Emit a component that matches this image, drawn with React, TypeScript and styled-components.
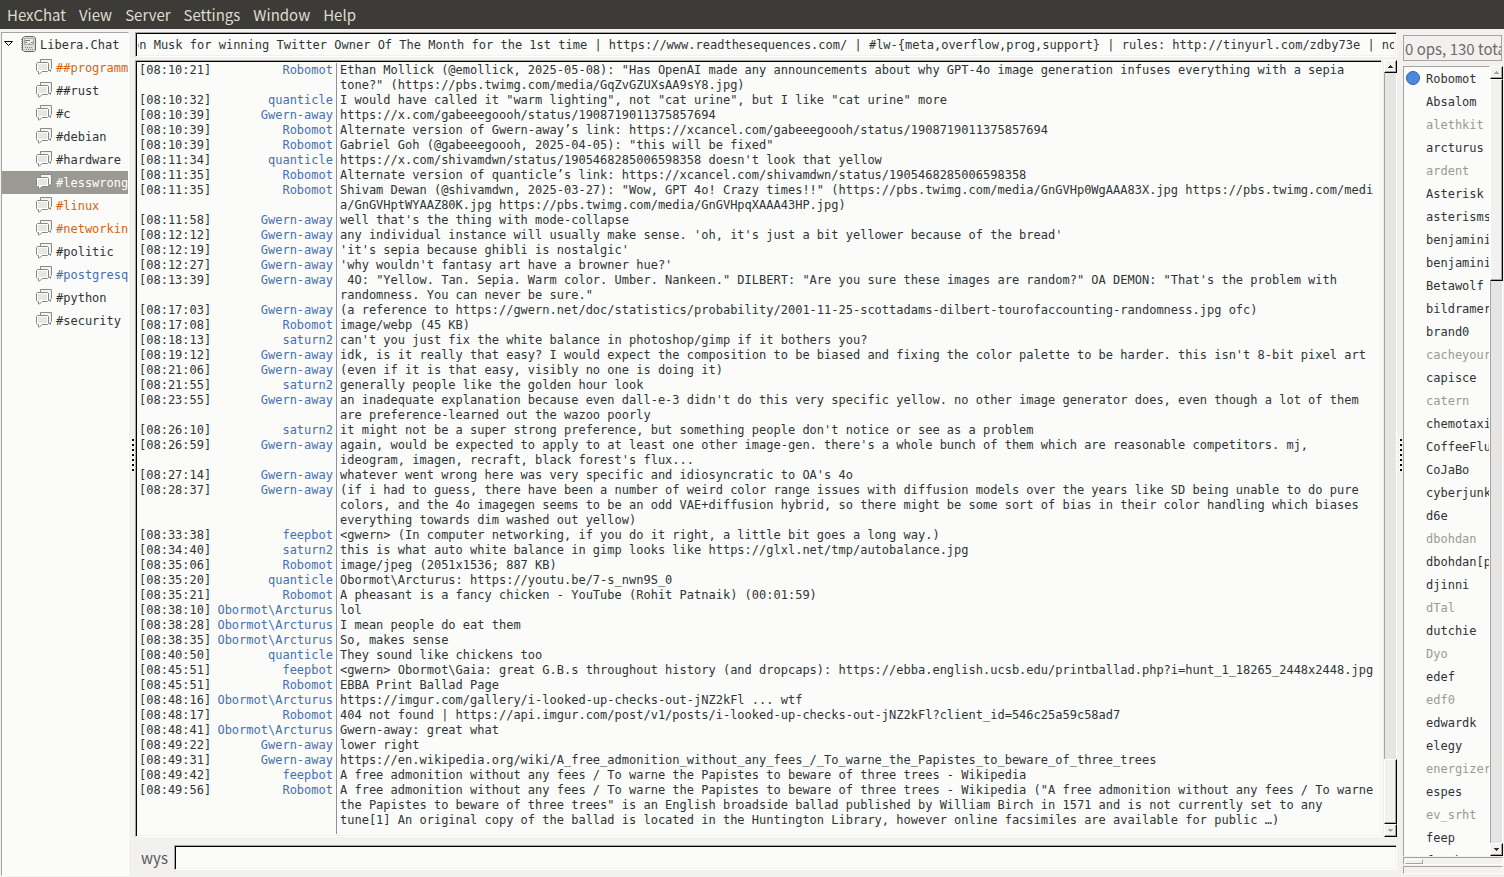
import React from "react";
import styled, { createGlobalStyle } from "styled-components";

const mono = `"DejaVu Sans Mono", "Liberation Mono", monospace`;
const sans = `"Noto Sans CJK SC", "Noto Sans", sans-serif`;

const c = {
  bg: "#f2f1f0",
  base: "#fbfbf9",
  menu: "#3c3b37",
  menuText: "#dfdbd2",
  text: "#2e3436",
  nick: "#4570ae",
  line: "#8d8da4",
  orange: "#d8640c",
  dim: "#9a9a95",
  selected: "#9a9992",
  shadow: "#a5a4a2",
  trough: "#e6e5e4",
};

const GlobalStyle = createGlobalStyle`
  * { box-sizing: border-box; }
  body { margin: 0; background: ${c.bg}; color: ${c.text}; font: 12px/15px ${mono}; }
  button, input { font: inherit; color: inherit; border-radius: 0; margin: 0; }
`;

const Window = styled.div`
  display: flex;
  flex-direction: column;
  height: 100vh;
  overflow: hidden;
`;

const MenuBar = styled.nav`
  display: flex;
  flex: none;
  height: 29px;
  padding: 0 1px;
  background: ${c.menu};
`;

const MenuItem = styled.button`
  padding: 0 6px;
  margin: 0 1px 0 0;
  border: 0;
  background: none;
  color: ${c.menuText};
  font: 15px/24px ${sans};
`;

const Workspace = styled.div`
  display: flex;
  flex: 1;
  min-height: 0;
  padding: 3px 1px 1px;
`;

const Tree = styled.aside`
  flex: none;
  width: 128px;
  overflow: hidden;
  border: 1px solid #fff;
  border-top-color: ${c.shadow};
  border-left-color: ${c.shadow};
  background: ${c.base};
`;

const TreeRow = styled.button<{ $color?: string; $selected?: boolean; $server?: boolean }>`
  display: flex;
  align-items: flex-start;
  gap: 4px;
  width: 100%;
  height: 23px;
  padding: 0 0 0 ${(p) => (p.$server ? 1 : 34)}px;
  border: 0;
  overflow: hidden;
  white-space: nowrap;
  line-height: 25px;
  background: ${(p) => (p.$selected ? c.selected : "transparent")};
  color: ${(p) => (p.$selected ? "#fff" : p.$color || c.text)};

  svg { flex: none; margin-top: 3px; }
`;

const Handle = styled.div`
  display: flex;
  flex: none;
  flex-direction: column;
  align-items: center;
  justify-content: center;
  gap: 2px;
  width: 6px;
  padding-left: 1px;
`;

const Grip = styled.i`
  width: 3px;
  height: 3px;
  border: solid #fff;
  border-width: 1px 0 0 1px;
  background: #000;
`;

const Main = styled.main`
  display: flex;
  flex: 1;
  flex-direction: column;
  min-width: 0;
  padding-bottom: 6px;
`;

const sunken = `
  border: 1px solid #fff;
  border-top-color: ${c.shadow};
  border-left-color: ${c.shadow};
  box-shadow: inset 1px 1px #000, inset -1px -1px ${c.bg};
  background: ${c.base};
`;

const Topic = styled.input`
  ${sunken}
  flex: none;
  width: 100%;
  height: 25px;
  padding: 0 2px;
  outline: 0;
  text-indent: -6px;
`;

const LogArea = styled.div`
  display: flex;
  flex: 1;
  min-height: 0;
  gap: 2px;
  margin: 3px 0 8px;
`;

const Log = styled.div`
  ${sunken}
  display: flex;
  flex: 1;
  flex-direction: column;
  min-width: 0;
  padding: 2px 1px 2px 3px;
  overflow: hidden;
`;

const Message = styled.div`
  display: flex;
  flex: none;

  &:last-child { flex: 1; }
`;

const Time = styled.time`
  flex: none;
  width: 74px;
`;

const Nick = styled.span`
  flex: none;
  width: 124px;
  padding-right: 3px;
  border-right: 1px solid ${c.line};
  color: ${c.nick};
  text-align: right;
`;

const Body = styled.span<{ $breakAll: boolean }>`
  flex: 1;
  min-width: 0;
  padding-left: 3px;
  white-space: pre-wrap;
  overflow-wrap: anywhere;
  word-break: ${(p) => (p.$breakAll ? "break-all" : "normal")};
`;

const InputRow = styled.div`
  display: flex;
  flex: none;
  align-items: center;
  height: 25px;
`;

const NickButton = styled.button`
  flex: none;
  width: 39px;
  padding: 0;
  border: 0;
  background: none;
  color: #5a5a58;
  font: 15px/24px ${sans};
`;

const ChatInput = styled.input`
  ${sunken}
  flex: 1;
  min-width: 0;
  height: 25px;
  padding: 0 4px;
  outline: 0;
`;

const UserPane = styled.aside`
  display: flex;
  flex: none;
  flex-direction: column;
  width: 100px;
  padding: 3px 0 1px;
`;

const Count = styled.div`
  flex: none;
  height: 26px;
  margin-right: 1px;
  padding: 0 0 0 1px;
  overflow: hidden;
  border: 1px solid ${c.shadow};
  color: #6c6b69;
  font: 15px/26px ${sans};
  white-space: nowrap;
`;

const UserArea = styled.div`
  display: flex;
  flex: 1;
  min-height: 0;
  margin: 5px 0 1px;
`;

const UserList = styled.ul`
  flex: 1;
  min-width: 0;
  margin: 0;
  padding: 0;
  overflow: hidden;
  list-style: none;
  background: ${c.base};
  border-top: 1px solid ${c.shadow};
  border-left: 1px solid ${c.shadow};
  border-right: 1px solid #fff;
`;

const User = styled.li<{ $away: boolean }>`
  display: flex;
  align-items: flex-start;
  height: 23px;
  padding-left: 2px;
  color: ${(p) => (p.$away ? c.dim : c.text)};
  line-height: 25px;
  white-space: nowrap;
`;

const Status = styled.span<{ $on: boolean }>`
  flex: none;
  width: 14px;
  height: 14px;
  margin: 4px 6px 0 0;
  border-radius: 50%;
  border: 1px solid ${(p) => (p.$on ? "#2c62b4" : "transparent")};
  background: ${(p) => (p.$on ? "#4a89dd" : "transparent")};
`;

const Meter = styled.div`
  flex: none;
  height: 8px;
  margin-bottom: 1px;
  padding: 1px;
  border: 1px solid #fff;
  border-top-color: ${c.shadow};
  border-left-color: ${c.shadow};
`;

const MeterFill = styled.div`
  width: 18px;
  height: 5px;
  border: 1px solid ${c.shadow};
  border-top-color: #fff;
  border-left-color: #fff;
`;

const Track = styled.div`
  display: flex;
  flex: none;
  flex-direction: column;
  width: 13px;
  border-left: 1px solid ${c.shadow};
  border-right: 1px solid #fff;
  background: ${c.trough};
`;

const raised = `
  margin: 0 -1px;
  border: 1px solid #000;
  border-top-color: #fff;
  border-left-color: #fff;
  box-shadow: inset -1px -1px ${c.shadow};
  background: ${c.bg};
`;

const Arrow = styled.button<{ $dim?: boolean }>`
  ${raised}
  display: flex;
  flex: none;
  align-items: center;
  justify-content: center;
  height: 13px;
  padding: 0;
  color: ${(p) => (p.$dim ? c.shadow : "#2e2e2c")};
`;

const Space = styled.div<{ $grow: number }>`
  flex: ${(p) => p.$grow} 1 0;
`;

const Thumb = styled.div<{ $grow: number }>`
  ${raised}
  flex: ${(p) => p.$grow} 1 0;
`;

function ScrollBar({ before, size, after }: { before: number; size: number; after: number }) {
  return (
    <Track>
      <Arrow $dim={before === 0} aria-label="Scroll up">
        <svg width="5" height="3"><path d="M2 0h1v1h1v1h1v1H0V2h1V1h1z" fill="currentColor" /></svg>
      </Arrow>
      <Space $grow={before} />
      <Thumb $grow={size} />
      <Space $grow={after} />
      <Arrow $dim={after === 0} aria-label="Scroll down">
        <svg width="5" height="3"><path d="M0 0h5v1H4v1H3v1H2V2H1V1H0z" fill="currentColor" /></svg>
      </Arrow>
    </Track>
  );
}

const ChannelIcon = () => (
  <svg width="16" height="16" viewBox="0 0 16 16">
    <path d="M4.5 .5h11v9l-1 1v2l-2-2h-8z" fill="#f4f4f2" stroke="#888a85" />
    <path d="M1.500 3.5h10l1 1v7l-1 1H6l-2.500 2.500H2.500v-2.500h-1l-1-1v-7z" fill="#fff" stroke="#858783" />
    <path d="M2 5h9v6H2z" fill="#e6e6e4" />
  </svg>
);

const ServerIcon = () => (
  <svg width="15" height="16" viewBox="0 0 15 16">
    <path d="M0 3.5h2M0 5.5h2M0 7.5h2M0 9.5h2M0 11.5h2M0 13.5h2" stroke="#9a9c98" />
    <path d="M3.500 .5h9l2 1.500v12l-1.500 1.500h-10L1.500 14V2z" fill="#dcdcda" stroke="#666864" />
    <path d="M3.500 2.500h9v6h-9z" fill="#eeeeec" stroke="#a8aaa5" />
    <path d="M4 4.500h5M4 6.500h2M10 6.500h2M8 7.500h1" stroke="#777974" />
    <path d="M4 11.500h1M6 11.500h1M8 11.500h1M10 11.500h1M5 13.500h1M7 13.500h1M9 13.500h1M11 13.500h1" stroke="#888a85" />
  </svg>
);

const Expander = () => (
  <svg width="14" height="16" viewBox="0 0 14 16">
    <path d="M1.500 5.500h8L5.500 9.500z" fill="#fff" stroke="#000" />
  </svg>
);

const menus = ["HexChat", "View", "Server", "Settings", "Window", "Help"];

const channels: [string, string?][] = [
  ["##programming", c.orange], ["##rust"], ["#c"], ["#debian"], ["#hardware"], ["#lesswrong"],
  ["#linux", c.orange], ["#networking", c.orange], ["#politic"], ["#postgresql", c.nick], ["#python"], ["#security"],
];

const G = "Gwern-away", R = "Robomot", Q = "quanticle", S = "saturn2", F = "feepbot", O = "Obormot\\Arcturus";

// The optional fourth field lets a message with long links break inside a word.
const messages: [string, string, string, boolean?][] = [
  ["08:10:21", R, `Ethan Mollick (@emollick, 2025-05-08): "Has OpenAI made any announcements about why GPT-4o image generation infuses everything with a sepia tone?" (https://pbs.twimg.com/media/GqZvGZUXsAA9sY8.jpg)`],
  ["08:10:32", Q, `I would have called it "warm lighting", not "cat urine", but I like "cat urine" more`],
  ["08:10:39", G, "https://x.com/gabeeegoooh/status/1908719011375857694"],
  ["08:10:39", R, "Alternate version of Gwern-away’s link: https://xcancel.com/gabeeegoooh/status/1908719011375857694"],
  ["08:10:39", R, `Gabriel Goh (@gabeeegoooh, 2025-04-05): "this will be fixed"`],
  ["08:11:34", Q, "https://x.com/shivamdwn/status/1905468285006598358 doesn't look that yellow"],
  ["08:11:35", R, "Alternate version of quanticle’s link: https://xcancel.com/shivamdwn/status/1905468285006598358"],
  ["08:11:35", R, `Shivam Dewan (@shivamdwn, 2025-03-27): "Wow, GPT 4o! Crazy times!!" (https://pbs.twimg.com/media/GnGVHp0WgAAA83X.jpg https://pbs.twimg.com/media/GnGVHptWYAAZ80K.jpg https://pbs.twimg.com/media/GnGVHpqXAAA43HP.jpg)`, true],
  ["08:11:58", G, "well that's the thing with mode-collapse"],
  ["08:12:12", G, "any individual instance will usually make sense. 'oh, it's just a bit yellower because of the bread'"],
  ["08:12:19", G, "'it's sepia because ghibli is nostalgic'"],
  ["08:12:27", G, "'why wouldn't fantasy art have a browner hue?'"],
  ["08:13:39", G, ` 4O: "Yellow. Tan. Sepia. Warm color. Umber. Nankeen." DILBERT: "Are you sure these images are random?" OA DEMON: "That's the problem with randomness. You can never be sure."`],
  ["08:17:03", G, "(a reference to https://gwern.net/doc/statistics/probability/2001-11-25-scottadams-dilbert-tourofaccounting-randomness.jpg ofc)"],
  ["08:17:08", R, "image/webp (45 KB)"],
  ["08:18:13", S, "can't you just fix the white balance in photoshop/gimp if it bothers you?"],
  ["08:19:12", G, "idk, is it really that easy? I would expect the composition to be biased and fixing the color palette to be harder. this isn't 8-bit pixel art"],
  ["08:21:06", G, "(even if it is that easy, visibly no one is doing it)"],
  ["08:21:55", S, "generally people like the golden hour look"],
  ["08:23:55", G, "an inadequate explanation because even dall-e-3 didn't do this very specific yellow. no other image generator does, even though a lot of them are preference-learned out the wazoo poorly"],
  ["08:26:10", S, "it might not be a super strong preference, but something people don't notice or see as a problem"],
  ["08:26:59", G, "again, would be expected to apply to at least one other image-gen. there's a whole bunch of them which are reasonable competitors. mj, ideogram, imagen, recraft, black forest's flux..."],
  ["08:27:14", G, "whatever went wrong here was very specific and idiosyncratic to OA's 4o"],
  ["08:28:37", G, "(if i had to guess, there have been a number of weird color range issues with diffusion models over the years like SD being unable to do pure colors, and the 4o imagegen seems to be an odd VAE+diffusion hybrid, so there might be some sort of bias in their color handling which biases everything towards dim washed out yellow)"],
  ["08:33:38", F, "<gwern> (In computer networking, if you do it right, a little bit goes a long way.)"],
  ["08:34:40", S, "this is what auto white balance in gimp looks like https://glxl.net/tmp/autobalance.jpg"],
  ["08:35:06", R, "image/jpeg (2051x1536; 887 KB)"],
  ["08:35:20", Q, "Obormot\\Arcturus: https://youtu.be/7-s_nwn9S_0"],
  ["08:35:21", R, "A pheasant is a fancy chicken - YouTube (Rohit Patnaik) (00:01:59)"],
  ["08:38:10", O, "lol"],
  ["08:38:28", O, "I mean people do eat them"],
  ["08:38:35", O, "So, makes sense"],
  ["08:40:50", Q, "They sound like chickens too"],
  ["08:45:51", F, "<gwern> Obormot\\Gaia: great G.B.s throughout history (and dropcaps): https://ebba.english.ucsb.edu/printballad.php?i=hunt_1_18265_2448x2448.jpg"],
  ["08:45:51", R, "EBBA Print Ballad Page"],
  ["08:48:16", O, "https://imgur.com/gallery/i-looked-up-checks-out-jNZ2kFl ... wtf"],
  ["08:48:17", R, "404 not found | https://api.imgur.com/post/v1/posts/i-looked-up-checks-out-jNZ2kFl?client_id=546c25a59c58ad7"],
  ["08:48:41", O, "Gwern-away: great what"],
  ["08:49:22", G, "lower right"],
  ["08:49:31", G, "https://en.wikipedia.org/wiki/A_free_admonition_without_any_fees_/_To_warne_the_Papistes_to_beware_of_three_trees"],
  ["08:49:42", F, "A free admonition without any fees / To warne the Papistes to beware of three trees - Wikipedia"],
  ["08:49:56", R, `A free admonition without any fees / To warne the Papistes to beware of three trees - Wikipedia ("A free admonition without any fees / To warne the Papistes to beware of three trees" is an English broadside ballad published by William Birch in 1571 and is not currently set to any tune[1] An original copy of the ballad is located in the Huntington Library, however online facsimiles are available for public …)`],
];

const users = [
  "Robomot", "Absalom", "alethkit", "arcturus", "ardent", "Asterisk", "asterisms", "benjamini", "benjamini", "Betawolf",
  "bildramer", "brand0", "cacheyour", "capisce", "catern", "chemotaxi", "CoffeeFlu", "CoJaBo", "cyberjunk", "d6e",
  "dbohdan", "dbohdan[p", "djinni", "dTal", "dutchie", "Dyo", "edef", "edf0", "edwardk", "elegy", "energizer",
  "espes", "ev_srht", "feep", "feepbot",
];
const away = new Set(["alethkit", "ardent", "cacheyour", "catern", "dbohdan", "dTal", "Dyo", "edf0", "energizer", "ev_srht"]);

const Splitter = () => (
  <Handle role="separator">
    {Array.from({ length: 7 }, (_, i) => <Grip key={i} />)}
  </Handle>
);

export default function App() {
  return (
    <Window>
      <GlobalStyle />
      <MenuBar>
        {menus.map((m) => <MenuItem key={m}>{m}</MenuItem>)}
      </MenuBar>
      <Workspace>
        <Tree>
          <TreeRow $server><Expander /><ServerIcon />Libera.Chat</TreeRow>
          {channels.map(([name, color]) => (
            <TreeRow key={name} $color={color} $selected={name === "#lesswrong"}>
              <ChannelIcon />{name}
            </TreeRow>
          ))}
        </Tree>
        <Splitter />
        <Main>
          <Topic aria-label="Topic" defaultValue="on Musk for winning Twitter Owner Of The Month for the 1st time | https://www.readthesequences.com/ | #lw-{meta,overflow,prog,support} | rules: http://tinyurl.com/zdby73e | no logs" />
          <LogArea>
            <Log role="log">
              {messages.map(([time, nick, body, breakAll = false], i) => (
                <Message key={i}>
                  <Time>{`[${time}]`}</Time>
                  <Nick>{nick}</Nick>
                  <Body $breakAll={breakAll}>{body}</Body>
                </Message>
              ))}
            </Log>
            <ScrollBar before={687} size={63} after={0} />
          </LogArea>
          <InputRow>
            <NickButton>wys</NickButton>
            <ChatInput aria-label="Message" />
          </InputRow>
        </Main>
        <Splitter />
        <UserPane>
          <Count>0 ops, 130 total</Count>
          <UserArea>
            <UserList>
              {users.map((name, i) => (
                <User key={i} $away={away.has(name)}>
                  <Status $on={i === 0} />{name}
                </User>
              ))}
            </UserList>
            <ScrollBar before={0} size={201} after={564} />
          </UserArea>
          <Meter><MeterFill /></Meter>
          <Meter />
        </UserPane>
      </Workspace>
    </Window>
  );
}
